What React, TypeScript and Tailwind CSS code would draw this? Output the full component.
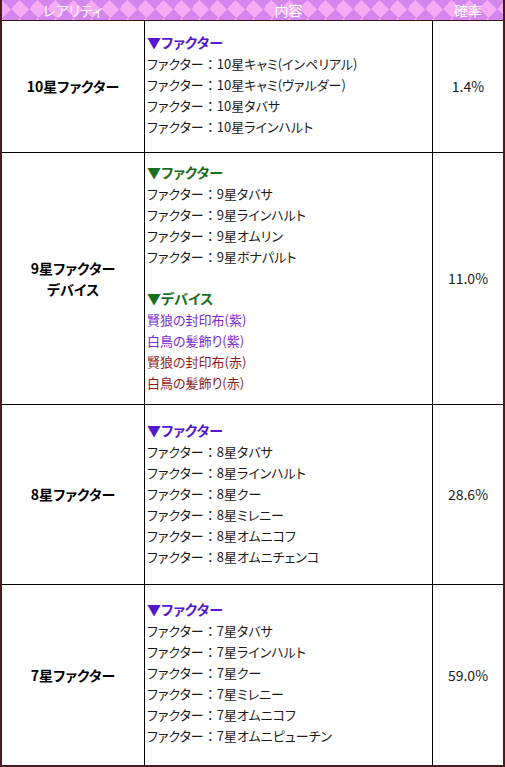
import React from 'react';

type Line = { text: string; tone?: 'plain' | 'purple' | 'red' };
type Group = { title: string; lines: Line[] };
type Row = {
  label: string[];
  heading: 'purple' | 'green';
  groups: Group[];
  rate: string;
  h: string;
  pt: string;
};

const rows: Row[] = [
  {
    label: ['10星ファクター'],
    heading: 'purple',
    rate: '1.4%',
    h: 'h-[132px]',
    pt: 'pt-[11px]',
    groups: [
      {
        title: '▼ファクター',
        lines: [
          { text: 'ファクター：10星キャミ(インペリアル)' },
          { text: 'ファクター：10星キャミ(ヴァルダー)' },
          { text: 'ファクター：10星タバサ' },
          { text: 'ファクター：10星ラインハルト' },
        ],
      },
    ],
  },
  {
    label: ['9星ファクター', 'デバイス'],
    heading: 'green',
    rate: '11.0%',
    h: 'h-[252px]',
    pt: 'pt-[9px]',
    groups: [
      {
        title: '▼ファクター',
        lines: [
          { text: 'ファクター：9星タバサ' },
          { text: 'ファクター：9星ラインハルト' },
          { text: 'ファクター：9星オムリン' },
          { text: 'ファクター：9星ボナパルト' },
        ],
      },
      {
        title: '▼デバイス',
        lines: [
          { text: '賢狼の封印布(紫)', tone: 'purple' },
          { text: '白鳥の髪飾り(紫)', tone: 'purple' },
          { text: '賢狼の封印布(赤)', tone: 'red' },
          { text: '白鳥の髪飾り(赤)', tone: 'red' },
        ],
      },
    ],
  },
  {
    label: ['8星ファクター'],
    heading: 'purple',
    rate: '28.6%',
    h: 'h-[180px]',
    pt: 'pt-[15px]',
    groups: [
      {
        title: '▼ファクター',
        lines: [
          { text: 'ファクター：8星タバサ' },
          { text: 'ファクター：8星ラインハルト' },
          { text: 'ファクター：8星クー' },
          { text: 'ファクター：8星ミレニー' },
          { text: 'ファクター：8星オムニコフ' },
          { text: 'ファクター：8星オムニチェンコ' },
        ],
      },
    ],
  },
  {
    label: ['7星ファクター'],
    heading: 'purple',
    rate: '59.0%',
    h: 'h-[180px]',
    pt: 'pt-[14px]',
    groups: [
      {
        title: '▼ファクター',
        lines: [
          { text: 'ファクター：7星タバサ' },
          { text: 'ファクター：7星ラインハルト' },
          { text: 'ファクター：7星クー' },
          { text: 'ファクター：7星ミレニー' },
          { text: 'ファクター：7星オムニコフ' },
          { text: 'ファクター：7星オムニピューチン' },
        ],
      },
    ],
  },
];

const toneClass = {
  plain: 'text-[#1a1a1a]',
  purple: 'text-[#7a2ad0]',
  red: 'text-[#8c1c1c]',
};

// keep the full-width colon wide while kana go proportional
function Text({ text }: { text: string }) {
  const i = text.indexOf('：');
  if (i < 0) return <>{text}</>;
  return (
    <>
      {text.slice(0, i)}
      <span className="[font-feature-settings:normal]">：</span>
      {text.slice(i + 1)}
    </>
  );
}

export default function App() {
  return (
    <div className="w-[505px] bg-white font-['Noto_Sans_CJK_JP','Noto_Sans',sans-serif] text-[14px] leading-[21px] text-[#1a1a1a] [font-feature-settings:'palt']">
      <div className="border-x-2 border-b-2 border-[#4a1a1c]">
        {/* header */}
        <div className="grid h-[21px] grid-cols-[142px_289px_1fr] border-b border-[#3a1018] bg-[repeating-conic-gradient(from_45deg,#f6aaf4_0_25%,#d286ee_0_50%)] bg-[length:18px_18px] text-[14px] leading-[20px] text-white">
          <div className="text-center">レアリティ</div>
          <div className="text-center">内容</div>
          <div className="text-center">確率</div>
        </div>

        {rows.map((row, i) => (
          <div
            key={i}
            className={`grid grid-cols-[142px_289px_1fr] ${row.h} ${i < rows.length - 1 ? 'border-b border-black' : ''}`}
          >
            <div className="flex flex-col items-center justify-center font-bold text-black">
              {row.label.map((l) => (
                <div key={l}>{l}</div>
              ))}
            </div>
            <div className={`border-x border-black pl-[2px] ${row.pt}`}>
              {row.groups.map((g, gi) => (
                <div key={gi} className={gi > 0 ? 'mt-[21px]' : ''}>
                  <div
                    className={`font-bold ${row.heading === 'green' ? 'text-[#1c6e1c]' : 'text-[#5418cc]'}`}
                  >
                    {g.title}
                  </div>
                  {g.lines.map((ln) => (
                    <div key={ln.text} className={`text-[13px] ${toneClass[ln.tone ?? 'plain']}`}>
                      <Text text={ln.text} />
                    </div>
                  ))}
                </div>
              ))}
            </div>
            <div className="flex items-center justify-center">{row.rate}</div>
          </div>
        ))}
      </div>
    </div>
  );
}
